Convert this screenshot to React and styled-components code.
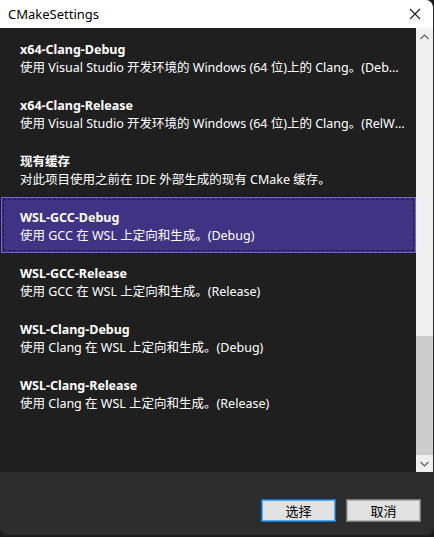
import React from 'react';
import styled, {createGlobalStyle} from 'styled-components';

const GlobalStyle = createGlobalStyle`
  html, body {
    margin: 0;
    padding: 0;
    background: #1b1b1b;
  }
  body {
    font-family: 'Noto Sans', 'Noto Sans CJK SC', sans-serif;
  }
`;

const configs = [
  {name: 'x64-Clang-Debug', desc: '使用 Visual Studio 开发环境的 Windows (64 位)上的 Clang。(Debug)'},
  {name: 'x64-Clang-Release', desc: '使用 Visual Studio 开发环境的 Windows (64 位)上的 Clang。(RelWithDebInfo)'},
  {name: '现有缓存', desc: '对此项目使用之前在 IDE 外部生成的现有 CMake 缓存。'},
  {name: 'WSL-GCC-Debug', desc: '使用 GCC 在 WSL 上定向和生成。(Debug)', selected: true},
  {name: 'WSL-GCC-Release', desc: '使用 GCC 在 WSL 上定向和生成。(Release)'},
  {name: 'WSL-Clang-Debug', desc: '使用 Clang 在 WSL 上定向和生成。(Debug)'},
  {name: 'WSL-Clang-Release', desc: '使用 Clang 在 WSL 上定向和生成。(Release)'}
];

const Window = styled.div`
  width: 433px;
  height: 535px;
  border-right: 1px solid #2a2a2a;
  border-radius: 0 8px 8px 8px;
  overflow: hidden;
  display: flex;
  flex-direction: column;
  background: #2d2d2d;
`;

const TitleBar = styled.div`
  height: 28px;
  background: #ffffff;
  display: flex;
  align-items: center;
  justify-content: space-between;
  padding: 0 8px 0 8px;
  box-sizing: border-box;
  flex-shrink: 0;
`;

const Title = styled.span`
  font-size: 13px;
  color: #000;
`;

const CloseButton = styled.div`
  width: 14px;
  height: 14px;
  display: flex;
  align-items: center;
  justify-content: center;
  margin-right: 3px;
`;

const ListArea = styled.div`
  height: 444px;
  display: flex;
  background: #1f1f1f;
  flex-shrink: 0;
`;

const List = styled.div`
  flex: 1;
  min-width: 0;
  padding-top: 1px;
  display: flex;
  flex-direction: column;
`;

const Item = styled.div`
  height: 56px;
  box-sizing: border-box;
  padding: 11px 10px 0 18px;
  margin-left: 1px;
  color: #ffffff;
  background: ${(p) => (p.$selected ? '#413384' : 'transparent')};
  border: 1px solid ${(p) => (p.$selected ? '#6e5fd4' : 'transparent')};
  outline: ${(p) => (p.$selected ? '1px dashed #1d1a3c' : 'none')};
  outline-offset: -3px;
`;

const ItemName = styled.div`
  font-size: 12.5px;
  font-weight: 700;
  line-height: 18px;
  white-space: nowrap;
`;

const ItemDesc = styled.div`
  font-size: 12.5px;
  line-height: 18px;
  white-space: nowrap;
  overflow: hidden;
  text-overflow: ellipsis;
`;

const ScrollBar = styled.div`
  width: 17px;
  background: #f0f0f0;
  display: flex;
  flex-direction: column;
`;

const ArrowButton = styled.div`
  height: 17px;
  display: flex;
  align-items: center;
  justify-content: center;
  background: #f0f0f0;
`;

const Track = styled.div`
  flex: 1;
  display: flex;
  flex-direction: column;
  justify-content: flex-end;
`;

const Thumb = styled.div`
  height: 119px;
  background: #cdcdcd;
`;

const Footer = styled.div`
  flex: 1;
  display: flex;
  justify-content: flex-end;
  align-items: flex-start;
  gap: 10px;
  padding: 27px 12px 0 0;
`;

const Button = styled.button`
  width: 75px;
  height: 23px;
  box-sizing: border-box;
  background: #e1e1e1;
  border: 1px solid ${(p) => (p.$primary ? '#0078d7' : '#7a7a7a')};
  box-shadow: inset 0 0 0 1px ${(p) => (p.$primary ? 'rgba(0, 120, 215, 0.55)' : 'rgba(122, 122, 122, 0.45)')};
  font-family: 'Noto Sans CJK SC', sans-serif;
  font-size: 13px;
  color: #000;
  padding: 0;
  line-height: 20px;
`;

function Chevron({up}) {
  return (
    <svg width="9" height="6" viewBox="0 0 9 6">
      <path d={up ? 'M0.5 5 L4.5 1 L8.5 5' : 'M0.5 1 L4.5 5 L8.5 1'} fill="none" stroke="#606060" strokeWidth="1.2" />
    </svg>
  );
}

export default function App() {
  return (
    <>
      <GlobalStyle />
      <Window>
        <TitleBar>
          <Title>CMakeSettings</Title>
          <CloseButton>
            <svg width="12" height="12" viewBox="0 0 12 12">
              <path d="M1 1 L11 11 M11 1 L1 11" stroke="#1a1a1a" strokeWidth="1.1" />
            </svg>
          </CloseButton>
        </TitleBar>
        <ListArea>
          <List>
            {configs.map((c) => (
              <Item $selected={c.selected} key={c.name}>
                <ItemName>{c.name}</ItemName>
                <ItemDesc>{c.desc}</ItemDesc>
              </Item>
            ))}
          </List>
          <ScrollBar>
            <ArrowButton>
              <Chevron up />
            </ArrowButton>
            <Track>
              <Thumb />
            </Track>
            <ArrowButton>
              <Chevron />
            </ArrowButton>
          </ScrollBar>
        </ListArea>
        <Footer>
          <Button $primary>选择</Button>
          <Button>取消</Button>
        </Footer>
      </Window>
    </>
  );
}
